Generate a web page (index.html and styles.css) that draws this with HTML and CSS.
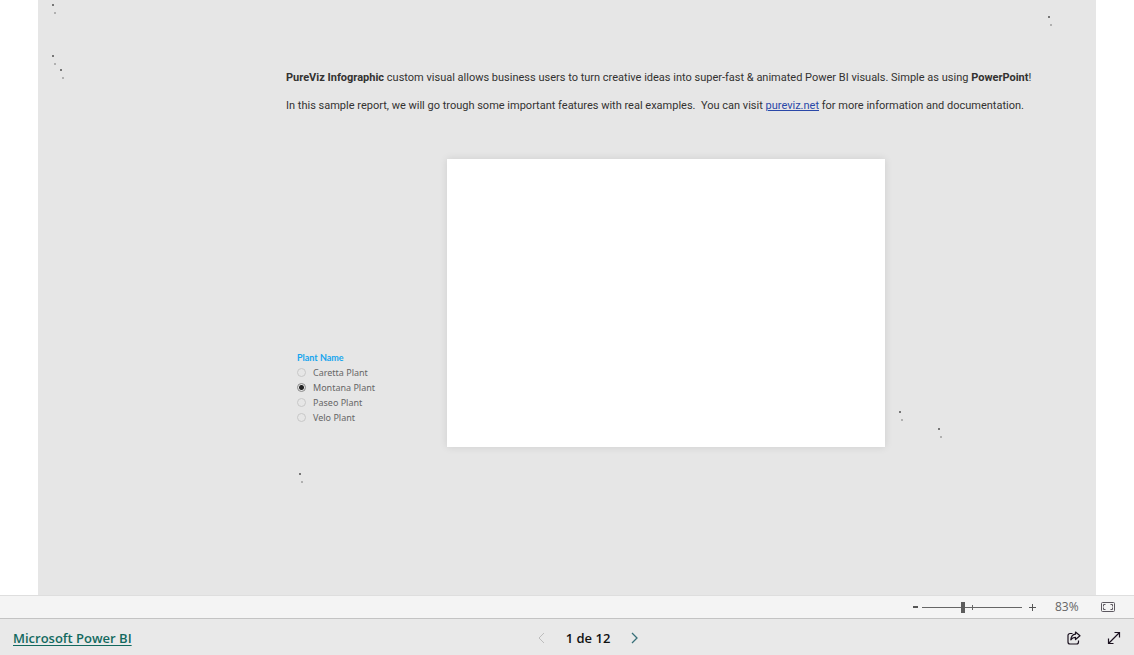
FILE: index.html
```html
<!DOCTYPE html>
<html lang="en">
<head>
<meta charset="utf-8">
<title>Microsoft Power BI</title>
<link rel="stylesheet" href="styles.css">
</head>
<body>
<main class="stage">
  <article class="report">
    <div class="intro">
      <p><b>PureViz Infographic</b> custom visual allows business users to turn creative ideas into super-fast &amp; animated Power BI visuals. Simple as using <b>PowerPoint</b>!</p>
      <p>In this sample report, we will go trough some important features with real examples.&nbsp; You can visit <a href="#">pureviz.net</a> for more information and documentation.</p>
    </div>
    <div class="visuals">
      <fieldset class="slicer">
        <legend>Plant Name</legend>
        <label><input type="radio" name="plant">Caretta Plant</label>
        <label><input type="radio" name="plant" checked>Montana Plant</label>
        <label><input type="radio" name="plant">Paseo Plant</label>
        <label><input type="radio" name="plant">Velo Plant</label>
      </fieldset>
      <section class="panel"></section>
    </div>
    <i class="spinner s1"></i>
    <i class="spinner s2"></i>
    <i class="spinner s3"></i>
    <i class="spinner s4"></i>
    <i class="spinner s5"></i>
    <i class="spinner s6"></i>
    <i class="spinner s7"></i>
  </article>
</main>
<div class="zoombar">
  <button class="step minus" aria-label="Zoom out"><svg width="5" height="2"><path d="M0 1h5" stroke="#555" stroke-width="2"/></svg></button>
  <div class="track"><input type="range" min="0" max="100" value="41" aria-label="Zoom"></div>
  <button class="step plus" aria-label="Zoom in"><svg width="7" height="7"><path d="M0 3.5h7M3.5 0v7" stroke="#555"/></svg></button>
  <output class="percent">83%</output>
  <button class="fit" aria-label="Fit to page"><svg width="14" height="10" fill="none" stroke="#5c5860"><rect x=".5" y=".5" width="13" height="9" rx="1"/><path d="M4.5 2.5h-2v2M2.5 5.5v2h2M9.500 2.500h2v2M11.500 5.500v2h-2"/></svg></button>
</div>
<footer class="footer">
  <div class="brand"><a href="#">Microsoft Power BI</a></div>
  <nav class="pager">
    <button aria-label="Previous page" disabled><svg width="7" height="12" fill="none" stroke="#bdbdbd"><path d="M6 1 1 6l5 5"/></svg></button>
    <span>1 de 12</span>
    <button aria-label="Next page"><svg width="7" height="12" fill="none" stroke="#376f78" stroke-width="1.300"><path d="m1 1 5 5-5 5"/></svg></button>
  </nav>
  <div class="actions">
    <button aria-label="Share"><svg width="14" height="14" fill="none" stroke="#1b111f" stroke-width="1.200" stroke-linejoin="round"><path d="M5.500 2.500H3a2 2 0 0 0-2 2V11a2 2 0 0 0 2 2h6.500a2 2 0 0 0 2-2V9.500"/><path d="M8.500 1 13 4.700 8.500 8.500V6.300C6.300 6.200 5 7 3.800 8.800 4.100 5.500 5.500 3.500 8.500 3.200Z"/></svg></button>
    <button aria-label="Full screen"><svg width="14" height="14" fill="none" stroke="#1b111f" stroke-width="1.200"><path d="M1.500 12.500 12.500 1.500M7.500 1.500h5v5M1.500 7.500v5h5"/></svg></button>
  </div>
</footer>
</body>
</html>
```
FILE: styles.css
```css
* { box-sizing: border-box; }
body {
  margin: 0;
  min-height: 100vh;
  display: flex;
  flex-direction: column;
  background: #fff;
  font-family: "Open Sans", "Noto Sans", sans-serif;
}
button {
  border: 0;
  padding: 0;
  background: none;
  display: flex;
  align-items: center;
  justify-content: center;
}
.stage {
  flex: 1;
  display: flex;
  padding: 0 38px;
}
.report {
  flex: 1;
  position: relative;
  background: #e6e6e6;
  padding: 71px 0 0 248px;
}
.intro {
  font-family: Roboto, "Open Sans", sans-serif;
  font-size: 11px;
  line-height: 14px;
  color: #333231;
  white-space: nowrap;
}
.intro p { margin: 0 0 14px; }
.intro a { color: #2a48a8; }
.visuals {
  display: grid;
  grid-template-columns: 150px 438px;
  align-items: end;
  margin: 46px 0 0 11px;
}
.panel {
  height: 288px;
  background: #fff;
  box-shadow: 0 0 8px rgba(0, 0, 0, 0.11);
}
.slicer {
  border: 0;
  margin: 0 0 22px;
  padding: 0;
  font-family: "Noto Sans", "Open Sans", sans-serif;
  font-size: 9px;
  line-height: 15px;
  color: #666;
}
.slicer legend {
  padding: 0;
  font-family: Lato, "Open Sans", sans-serif;
  font-weight: 700;
  color: #17a5ee;
}
.slicer label {
  display: flex;
  align-items: center;
  gap: 7px;
}
.slicer input {
  appearance: none;
  width: 9px;
  height: 9px;
  margin: 0;
  border: 1px solid #c8c8c8;
  border-radius: 50%;
}
.slicer input:checked {
  border-color: #8a8a8a;
  background: radial-gradient(circle, #222 0 2px, transparent 3px);
}
.spinner {
  position: absolute;
  width: 2px;
  height: 2px;
  background: #777;
  box-shadow: 2px 8px #b0b0b0;
}
.s1 { left: 14px; top: 4px; }
.s2 { left: 14px; top: 55px; }
.s3 { left: 22px; top: 69px; }
.s4 { left: 1010px; top: 16px; }
.s5 { left: 861px; top: 411px; }
.s6 { left: 900px; top: 428px; }
.s7 { left: 261px; top: 473px; }
.zoombar {
  height: 24px;
  display: flex;
  align-items: center;
  justify-content: flex-end;
  padding-right: 19px;
  background: #f4f4f4;
  border-top: 1px solid #dedede;
  border-bottom: 1px solid #c3c3c3;
}
.track {
  width: 100px;
  height: 12px;
  margin: 0 7px 0 4px;
  display: flex;
  background:
    linear-gradient(#666, #666) 50px 4px / 1px 5px no-repeat,
    linear-gradient(#666, #666) 0 6px / 100% 1px no-repeat;
}
.track input {
  appearance: none;
  width: 100%;
  height: 12px;
  margin: 0;
  background: none;
}
.track input::-webkit-slider-thumb {
  appearance: none;
  width: 4px;
  height: 11px;
  background: #5c5c5c;
}
.percent {
  width: 24px;
  margin: 0 22px 0 19px;
  font-size: 12px;
  line-height: 16px;
  color: #666;
}
.footer {
  height: 36px;
  display: grid;
  grid-template-columns: 1fr auto 1fr;
  align-items: center;
  padding: 2px 13px 0;
  background: #e9e9e9;
}
.brand {
  font-size: 13px;
  line-height: 18px;
  font-weight: 600;
}
.brand a {
  color: #13695f;
  text-underline-offset: 2px;
}
.pager {
  display: flex;
  align-items: center;
  gap: 21px;
  padding-left: 42px;
  font-size: 13px;
  line-height: 18px;
  font-weight: 600;
  color: #111;
}
.actions {
  display: flex;
  justify-content: flex-end;
  gap: 26px;
}
```
